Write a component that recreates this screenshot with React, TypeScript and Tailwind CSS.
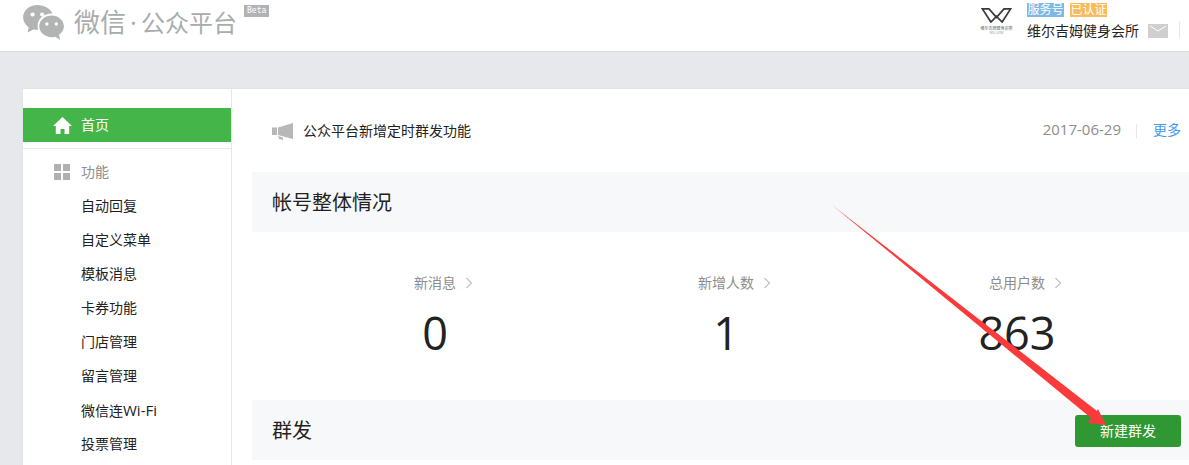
import { FunctionComponent } from "react";

const cjk = "font-['Open_Sans','Noto_Sans_CJK_SC',sans-serif]";

const menuItems = [
    "自动回复",
    "自定义菜单",
    "模板消息",
    "卡券功能",
    "门店管理",
    "留言管理",
    <>微信连<span className="text-[15px]">Wi-Fi</span></>,
    "投票管理",
];

const stats = [
    { label: "新消息", value: "0", cls: "w-[340px]" },
    { label: "新增人数", value: "1", cls: "w-[242px]" },
    { label: "总用户数", value: "863", cls: "w-[340px]" },
];

const WechatLogo = () => (
    <svg width="42" height="37" viewBox="0 0 44 39" className="shrink-0">
        <path fill="#b2b4b4" d="M15 0C7 0 0 5.600 0 13c0 4.300 2.300 7.900 5.800 10.400L4.800 29l6-3.300c1.300.3 2.700.5 4.200.5h1c-.5-1.300-.7-2.700-.7-4.100C15.300 14.500 22 9 30 9c.4 0 .6 0 1 .1C28.800 3.800 22.500 0 15 0z" />
        <path fill="#b2b4b4" d="M43 22.500C43 16 36.800 11 30 11s-13 5-13 11.500S23.200 34 30 34c1.300 0 2.700-.2 4-.6l5 3.600-1.200-5.600c3.200-2.300 5.200-5.400 5.200-8.900z" />
        <circle cx="10" cy="10" r="2.200" fill="#fff" />
        <circle cx="20" cy="10" r="2.200" fill="#fff" />
        <circle cx="25" cy="20" r="1.800" fill="#fff" />
        <circle cx="35" cy="20" r="1.800" fill="#fff" />
    </svg>
);

const BrandLogo = () => (
    <div className="w-[33px] flex flex-col items-center">
        <svg width="31" height="15" viewBox="0 0 32 16">
            <path d="M1 1h7l8 9 8-9h7L22 15l-6-6-6 6z" fill="none" stroke="#3a3a3a" strokeWidth="1.800" />
        </svg>
        <span className="text-[4px] leading-[5px] mt-[3px] text-[#555] whitespace-nowrap">维尔吉姆健身会所</span>
        <span className="text-[3px] leading-[4px] text-[#999] whitespace-nowrap">WELLGYM</span>
    </div>
);

const Header: FunctionComponent = () => (
    <div className="h-[52px] bg-white border-b border-[#d9dadc] flex">
        <div className="pl-[23px] pt-[5px] flex items-start">
            <WechatLogo />
            <span className="ml-[9px] mt-[1px] text-[26px] leading-[32px] text-[#a9acac] whitespace-nowrap">
                微信<span className="inline-block w-[15px] text-center">·</span><span className="text-[24px]">公众平台</span>
            </span>
            <span className="ml-[7px] bg-[#b2b4b4] text-white text-[8px] leading-[12px] px-[3px] font-['DejaVu_Sans_Mono',monospace]">Beta</span>
        </div>
        <div className="ml-auto flex items-start pr-[9px]">
            <div className="mt-[8px] mr-[14px]"><BrandLogo /></div>
            <div className="w-[121px] pt-[3px]">
                <div className="flex gap-[6px]">
                    <span className="bg-[#7eb9e4] text-white text-[12px] leading-[14px] h-[14px] w-[37px] text-center whitespace-nowrap">服务号</span>
                    <span className="bg-[#f9bb5b] text-white text-[12px] leading-[14px] h-[14px] w-[37px] text-center whitespace-nowrap">已认证</span>
                </div>
                <div className="flex items-center mt-[2px]">
                    <span className="text-[14px] leading-[24px] text-[#222] whitespace-nowrap">维尔吉姆健身会所</span>
                </div>
            </div>
            <svg width="20" height="14" viewBox="0 0 20 14" className="mt-[24px]">
                <rect width="20" height="14" fill="#cfcfcf" />
                <path d="M2 2l8 5 8-5" fill="none" stroke="#fff" strokeWidth="1" />
            </svg>
            <div className="ml-[11px] mt-[22px] w-px h-[16px] bg-[#e4e5e7]" />
        </div>
    </div>
);

const Sidebar: FunctionComponent = () => (
    <div className="w-[209px] shrink-0 border-r border-[#e7e7eb] pt-[19px]">
        <div className="h-[34px] bg-[#44b549] flex items-center pl-[30px] text-white text-[14px]">
            <svg width="19" height="17" viewBox="0 0 19 17" className="mr-[9px]">
                <path fill="#fff" d="M9.500 0L0 9h2.800v8h4.700v-5h4v5h4.700V9H19z" />
            </svg>
            <span className="mb-[2px]">首页</span>
        </div>
        <div className="mt-[6px] border-t border-[#e7e7eb] pt-[12px]">
            <div className="h-[22px] flex items-center pl-[31px] text-[14px] text-[#8d8d8d]">
                <div className="grid grid-cols-2 gap-[2px] mr-[11px]">
                    <div className="w-[7px] h-[7px] bg-[#b0b0b0]" />
                    <div className="w-[7px] h-[7px] bg-[#b0b0b0]" />
                    <div className="w-[7px] h-[7px] bg-[#b0b0b0]" />
                    <div className="w-[7px] h-[7px] bg-[#b0b0b0]" />
                </div>
                <span className="mb-[2px]">功能</span>
            </div>
            <div className="pt-[6px]">
                {menuItems.map((item, i) => (
                    <div key={i} className="h-[34px] leading-[34px] pl-[58px] text-[14px] text-[#222]">{item}</div>
                ))}
            </div>
        </div>
    </div>
);

const Megaphone = () => (
    <svg width="21" height="17" viewBox="0 0 21 17">
        <path fill="#b8b8b8" d="M0 4.500h5V12H0zM6 4.500L21 0v16L6 12zM6 13l5 1.500V17l-4-1z" />
    </svg>
);

const Chevron = () => (
    <svg width="8" height="12" viewBox="0 0 8 12" className="absolute left-full top-[6px] ml-[9px]">
        <path d="M1.500 1l5 5-5 5" fill="none" stroke="#9a9a9a" strokeWidth="1" />
    </svg>
);

const Main: FunctionComponent = () => (
    <div className="flex-1 min-w-0 pl-[20px] pt-[19px]">
        <div className="h-[46px] flex items-center pl-[20px] pr-[8px] text-[14px]">
            <Megaphone />
            <span className="ml-[10px] mb-[2px] text-[#222]">公众平台新增定时群发功能</span>
            <span className="ml-auto mb-[3px] text-[15px] text-[#8d8d8d]">2017-06-29</span>
            <div className="ml-[15px] mr-[16px] w-px h-[14px] bg-[#e7e7eb]" />
            <span className="mb-[4px] text-[14px] text-[#459ae9]">更多</span>
        </div>
        <div className="mt-[18px] h-[60px] bg-[#f6f8f9] flex items-center pl-[20px] pt-[2px] text-[20px] text-[#222]">帐号整体情况</div>
        <div className="h-[168px] flex pt-[39px] pl-[13px]">
            {stats.map((s) => (
                <div key={s.label} className={`${s.cls} flex flex-col items-center`}>
                    <div className="relative h-[24px] leading-[24px] text-[14px] text-[#8d8d8d]">
                        {s.label}
                        <Chevron />
                    </div>
                    <div className="text-[45px] leading-[62px] mt-[7px] text-[#222] font-['Open_Sans',sans-serif]">{s.value}</div>
                </div>
            ))}
        </div>
        <div className="h-[60px] bg-[#f6f8f9] flex items-center pl-[20px] pr-[8px] pt-[2px]">
            <span className="text-[20px] text-[#222]">群发</span>
            <button className="ml-auto w-[106px] h-[32px] pb-[2px] rounded-[3px] bg-[#2f9833] text-white text-[14px]">新建群发</button>
        </div>
    </div>
);

const Arrow = () => (
    <svg width="1189" height="465" viewBox="0 0 1189 465" className="absolute inset-0 pointer-events-none">
        <path fill="#fb3b3b" d="M832 205L1097 411 1098 409 1106 425 1088 423 1091 418z" />
    </svg>
);

const App: FunctionComponent = () => (
    <div className={`relative h-[465px] overflow-hidden bg-[#e7e8eb] ${cjk}`}>
        <Header />
        <div className="ml-[22px] mt-[36px] bg-white h-[377px] flex border-l border-t border-[#e3e4e6]">
            <Sidebar />
            <Main />
        </div>
        <Arrow />
    </div>
);

export default App;
